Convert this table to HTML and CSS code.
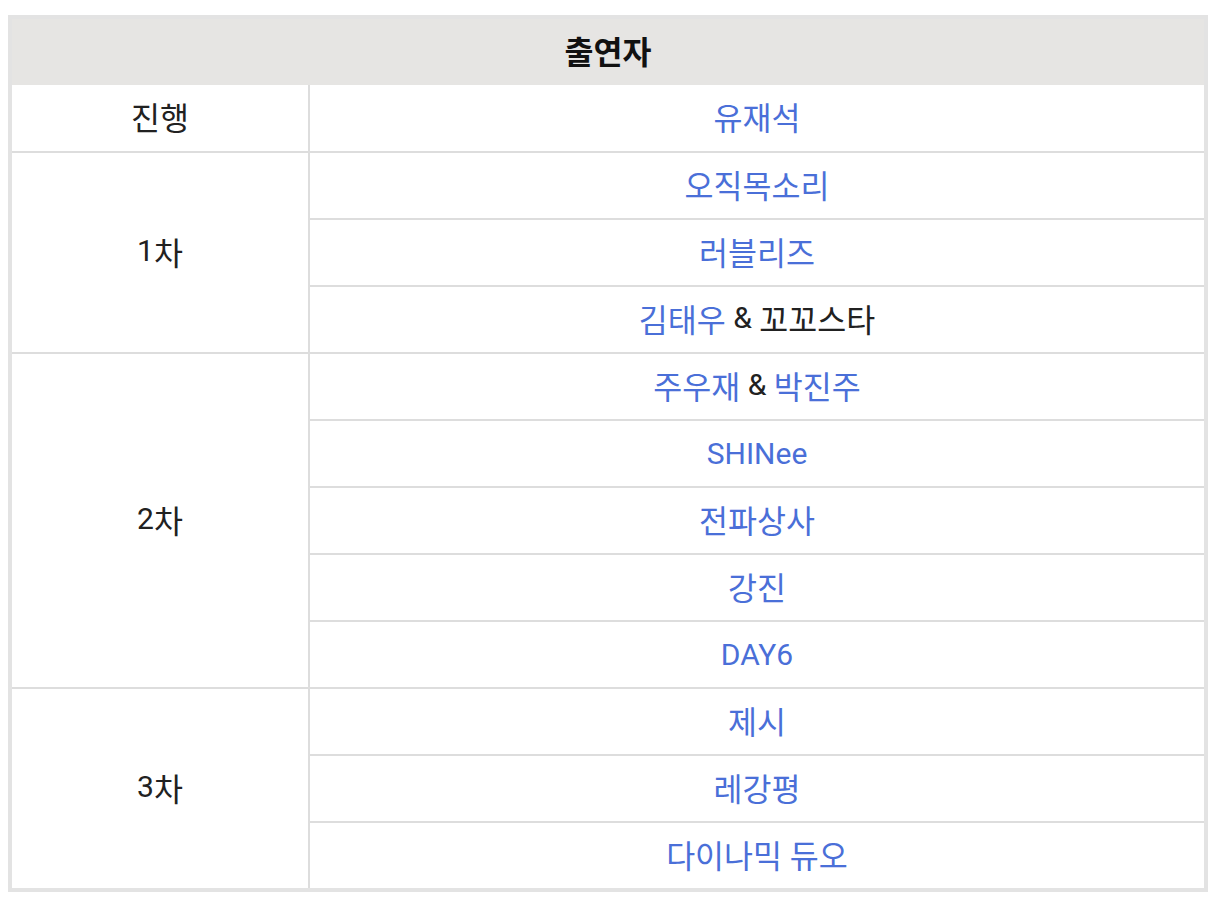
FILE: index.html
```html
<!DOCTYPE html>
<html lang="ko">
<head>
<meta charset="utf-8">
<link rel="stylesheet" href="styles.css">
</head>
<body>
<div class="tbl">
  <div class="head">출연자</div>
  <div class="group first">
    <div class="label">진행</div>
    <div class="cells">
      <div class="cell tall"><span class="lk">유재석</span></div>
    </div>
  </div>
  <div class="group">
    <div class="label"><span class="lat">1</span>차</div>
    <div class="cells">
      <div class="cell"><span class="lk">오직목소리</span></div>
      <div class="cell"><span class="lk">러블리즈</span></div>
      <div class="cell"><span class="lk">김태우</span><span class="lat"> &amp; </span>꼬꼬스타</div>
    </div>
  </div>
  <div class="group">
    <div class="label"><span class="lat">2</span>차</div>
    <div class="cells">
      <div class="cell"><span class="lk">주우재</span><span class="lat"> &amp; </span><span class="lk">박진주</span></div>
      <div class="cell latin"><span class="lk lat">SHINee</span></div>
      <div class="cell"><span class="lk">전파상사</span></div>
      <div class="cell"><span class="lk">강진</span></div>
      <div class="cell latin"><span class="lk lat">DAY6</span></div>
    </div>
  </div>
  <div class="group">
    <div class="label"><span class="lat">3</span>차</div>
    <div class="cells">
      <div class="cell"><span class="lk">제시</span></div>
      <div class="cell"><span class="lk">레강평</span></div>
      <div class="cell"><span class="lk">다이나믹 듀오</span></div>
    </div>
  </div>
</div>
</body>
</html>
```
FILE: styles.css
```css
html, body {
  margin: 0;
  padding: 0;
  background: #ffffff;
}
body {
  padding: 15px 0 0 8px;
  font-family: Roboto, "Noto Sans CJK KR", sans-serif;
  font-size: 31.5px;
  color: #212121;
}
.tbl {
  width: 1200px;
  box-sizing: border-box;
  border: 4px solid #e3e3e3;
}
.head {
  height: 66px;
  background: #e6e5e3;
  display: flex;
  align-items: center;
  justify-content: center;
  font-weight: 700;
  color: #111;
  padding-bottom: 4px;
  box-sizing: border-box;
}
.group {
  display: flex;
  border-top: 2px solid #dddddd;
}
.group.first {
  border-top: none;
}
.label {
  width: 298px;
  flex: none;
  border-right: 2px solid #dddddd;
  display: flex;
  align-items: center;
  justify-content: center;
  padding-bottom: 4px;
  box-sizing: border-box;
}
.cells {
  flex: 1;
  display: flex;
  flex-direction: column;
}
.cell {
  height: 65px;
  display: flex;
  align-items: center;
  justify-content: center;
  white-space: pre;
  padding-bottom: 4px;
  box-sizing: border-box;
}
.cell.tall {
  height: 66px;
}
.cell + .cell {
  border-top: 2px solid #dddddd;
  height: 67px;
}
.cell.latin {
  padding-bottom: 0;
}
.lat {
  font-size: 30px;
}
.lk {
  color: #4a6fd8;
}
```
